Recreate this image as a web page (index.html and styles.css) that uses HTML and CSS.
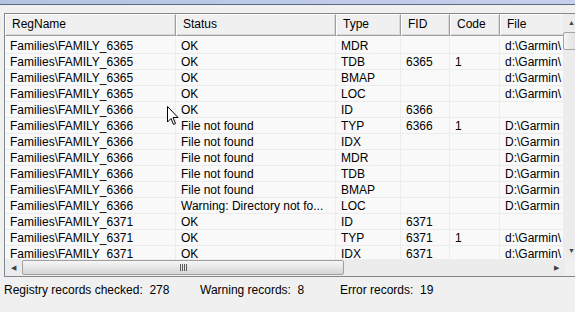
FILE: index.html
```html
<!DOCTYPE html>
<html lang="en">
<head>
    <meta charset="UTF-8">
    <title>Registry Check</title>
    <link rel="stylesheet" href="styles.css">
</head>
<body>
    <div class="titlebar"></div>
    <div class="frame">
        <div class="main">
            <div class="grid">
                <div class="row head">
                    <div class="c c1">RegName</div>
                    <div class="c c2">Status</div>
                    <div class="c c3">Type</div>
                    <div class="c c4">FID</div>
                    <div class="c c5">Code</div>
                    <div class="c c6">File</div>
                </div>
                <div class="row"><div class="c c1">Families\FAMILY_6365</div><div class="c c2">OK</div><div class="c c3">MDR</div><div class="c c4"></div><div class="c c5"></div><div class="c c6">d:\Garmin\</div></div>
                <div class="row"><div class="c c1">Families\FAMILY_6365</div><div class="c c2">OK</div><div class="c c3">TDB</div><div class="c c4">6365</div><div class="c c5">1</div><div class="c c6">d:\Garmin\</div></div>
                <div class="row"><div class="c c1">Families\FAMILY_6365</div><div class="c c2">OK</div><div class="c c3">BMAP</div><div class="c c4"></div><div class="c c5"></div><div class="c c6">d:\Garmin\</div></div>
                <div class="row"><div class="c c1">Families\FAMILY_6365</div><div class="c c2">OK</div><div class="c c3">LOC</div><div class="c c4"></div><div class="c c5"></div><div class="c c6">d:\Garmin\</div></div>
                <div class="row"><div class="c c1">Families\FAMILY_6366</div><div class="c c2">OK</div><div class="c c3">ID</div><div class="c c4">6366</div><div class="c c5"></div><div class="c c6"></div></div>
                <div class="row"><div class="c c1">Families\FAMILY_6366</div><div class="c c2">File not found</div><div class="c c3">TYP</div><div class="c c4">6366</div><div class="c c5">1</div><div class="c c6">D:\Garmin</div></div>
                <div class="row"><div class="c c1">Families\FAMILY_6366</div><div class="c c2">File not found</div><div class="c c3">IDX</div><div class="c c4"></div><div class="c c5"></div><div class="c c6">D:\Garmin</div></div>
                <div class="row"><div class="c c1">Families\FAMILY_6366</div><div class="c c2">File not found</div><div class="c c3">MDR</div><div class="c c4"></div><div class="c c5"></div><div class="c c6">D:\Garmin</div></div>
                <div class="row"><div class="c c1">Families\FAMILY_6366</div><div class="c c2">File not found</div><div class="c c3">TDB</div><div class="c c4"></div><div class="c c5"></div><div class="c c6">D:\Garmin</div></div>
                <div class="row"><div class="c c1">Families\FAMILY_6366</div><div class="c c2">File not found</div><div class="c c3">BMAP</div><div class="c c4"></div><div class="c c5"></div><div class="c c6">D:\Garmin</div></div>
                <div class="row"><div class="c c1">Families\FAMILY_6366</div><div class="c c2">Warning: Directory not fo...</div><div class="c c3">LOC</div><div class="c c4"></div><div class="c c5"></div><div class="c c6">D:\Garmin</div></div>
                <div class="row"><div class="c c1">Families\FAMILY_6371</div><div class="c c2">OK</div><div class="c c3">ID</div><div class="c c4">6371</div><div class="c c5"></div><div class="c c6"></div></div>
                <div class="row"><div class="c c1">Families\FAMILY_6371</div><div class="c c2">OK</div><div class="c c3">TYP</div><div class="c c4">6371</div><div class="c c5">1</div><div class="c c6">d:\Garmin\</div></div>
                <div class="row"><div class="c c1">Families\FAMILY_6371</div><div class="c c2">OK</div><div class="c c3">IDX</div><div class="c c4">6371</div><div class="c c5"></div><div class="c c6">d:\Garmin\</div></div>
            </div>
            <div class="vscroll">
                <div class="sbtn up">&#9650;</div>
                <div class="vthumb"></div>
                <div class="vtrack"></div>
                <div class="sbtn down">&#9660;</div>
            </div>
        </div>
        <div class="hscroll">
            <div class="sbtn left">&#9664;</div>
            <div class="hthumb"><span class="grip"></span></div>
            <div class="htrack"></div>
            <div class="sbtn right">&#9654;</div>
            <div class="corner"></div>
        </div>
    </div>
    <div class="status">
        <span class="stat s1">Registry records checked:&nbsp; 278</span>
        <span class="stat s2">Warning records:&nbsp; 8</span>
        <span class="stat s3">Error records:&nbsp; 19</span>
    </div>
    <svg class="cursor" width="12" height="20" viewBox="0 0 12 20">
        <path d="M0.5 0.5 L0.5 16 L4 12.5 L6.5 18.5 L8.5 17.5 L6 11.5 L11 11.5 Z" fill="#fff" stroke="#000" stroke-width="1"/>
    </svg>
</body>
</html>
```

FILE: styles.css
```css
body {
    margin: 0;
    width: 575px;
    height: 312px;
    overflow: hidden;
    background-color: #f0f0f0;
    font-family: "Liberation Sans", Arial, sans-serif;
    font-size: 12px;
    color: #000;
    position: relative;
}

.titlebar {
    height: 4px;
    background: linear-gradient(to right, #b4c3e4, #c6d0ec);
    border-bottom: 1px solid #5f6a80;
}

.frame {
    margin: 8px 0 0 4px;
    width: 590px;
    border: 1px solid #828790;
    background-color: #f0f0f0;
}

.main {
    display: flex;
    height: 245px;
}

.grid {
    width: 558px;
    overflow: hidden;
    background-color: #f9f9f9;
}

.row {
    display: flex;
    height: 16px;
    border-bottom: 1px solid #ececec;
    box-sizing: border-box;
}

.row .c {
    border-right: 1px solid #ececec;
    box-sizing: border-box;
    padding-left: 5px;
    line-height: 17px;
    white-space: nowrap;
    overflow: hidden;
    flex-shrink: 0;
}

.row.head {
    height: 22px;
    border-bottom: none;
    margin-bottom: 2px;
}

.row.head .c {
    background-color: #f0f0f0;
    border-top: 1px solid #fff;
    border-left: 1px solid #fff;
    border-right: 1px solid #a0a0a0;
    border-bottom: 1px solid #a0a0a0;
    box-shadow: inset -1px -1px 0 #d8d8d8;
    line-height: 19px;
    padding-left: 6px;
}

.c1 { width: 171px; }
.c2 { width: 160px; }
.c3 { width: 65px; }
.c4 { width: 49px; }
.c5 { width: 50px; }
.c6 { width: 80px; }

.vscroll {
    width: 17px;
    display: flex;
    flex-direction: column;
    background-color: #ececec;
}

.sbtn {
    width: 17px;
    height: 17px;
    font-size: 7px;
    color: #404040;
    display: flex;
    align-items: center;
    justify-content: center;
    flex-shrink: 0;
}

.vthumb {
    height: 16px;
    margin: 1px 0;
    background: linear-gradient(to right, #f4f4f4, #dcdcdc);
    border: 1px solid #a4a4a4;
    border-radius: 2px;
}

.vtrack {
    flex: 1;
}

.hscroll {
    display: flex;
    height: 17px;
    background-color: #ececec;
}

.hthumb {
    width: 322px;
    margin: 1px 0;
    box-sizing: border-box;
    background: linear-gradient(to bottom, #f6f6f6, #d6d6d6);
    border: 1px solid #a0a0a0;
    border-radius: 2px;
    display: flex;
    align-items: center;
    justify-content: center;
}

.grip {
    width: 7px;
    height: 7px;
    background: repeating-linear-gradient(to right, #5a5a5a 0 1px, transparent 1px 2px);
}

.htrack {
    flex: 1;
}

.corner {
    width: 30px;
    background-color: #f0f0f0;
}

.status {
    display: flex;
    padding: 6px 0 0 4px;
}

.stat.s1 { width: 196px; }
.stat.s2 { width: 140px; }

.cursor {
    position: absolute;
    left: 167px;
    top: 106px;
}
```
